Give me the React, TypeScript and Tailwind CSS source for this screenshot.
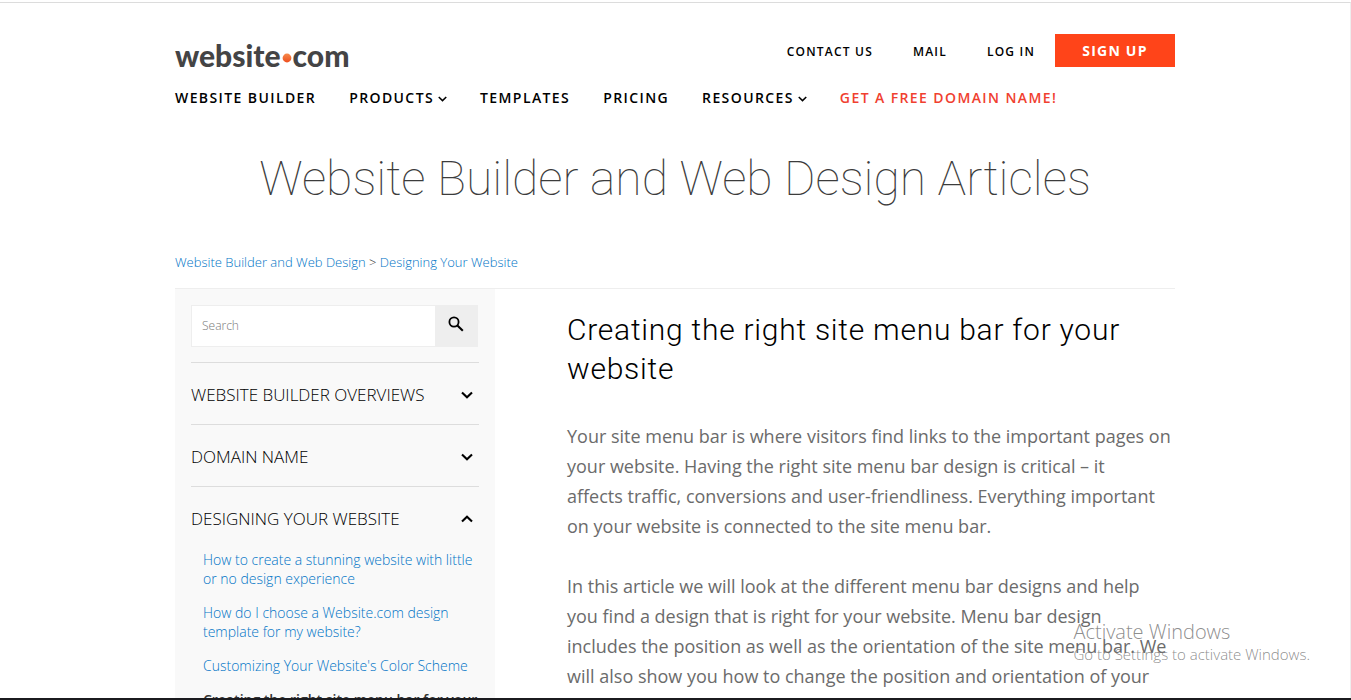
import React, { useState } from "react";

const NAV = [
  { label: "Website Builder", menu: false },
  { label: "Products", menu: true },
  { label: "Templates", menu: false },
  { label: "Pricing", menu: false },
  { label: "Resources", menu: true },
];

type Topic = { title: string; links: { label: string; current?: boolean }[] };

const TOPICS: Topic[] = [
  { title: "Website Builder Overviews", links: [] },
  { title: "Domain Name", links: [] },
  {
    title: "Designing Your Website",
    links: [
      { label: "How to create a stunning website with little or no design experience" },
      { label: "How do I choose a Website.com design template for my website?" },
      { label: "Customizing Your Website's Color Scheme" },
      { label: "Creating the right site menu bar for your website", current: true },
    ],
  },
];

function Caret({ className }: { className: string }) {
  return (
    <svg viewBox="0 0 12 8" className={className} fill="none" stroke="currentColor" aria-hidden="true">
      <path d="M1 1.4 6 6.2l5-4.8" strokeWidth="2.1" />
    </svg>
  );
}

function Logo() {
  return (
    <a href="#" className="flex items-baseline font-[Lato,sans-serif] text-[30px] leading-8 font-black text-[#444445]">
      website
      <svg viewBox="0 0 10 10" className="mx-px mt-1.5 size-[10px] self-center" aria-hidden="true">
        <defs>
          <linearGradient id="dot" x1="0" y1="0" x2="0" y2="1">
            <stop offset="0" stopColor="#f58a4b" />
            <stop offset="1" stopColor="#ee4f1f" />
          </linearGradient>
        </defs>
        <circle cx="5" cy="5" r="4.4" fill="url(#dot)" />
      </svg>
      com
    </a>
  );
}

function Header() {
  return (
    <header className="pt-[31px]">
      <div className="flex items-start justify-between">
        <div className="pt-[5px]">
          <Logo />
        </div>
        <div className="flex items-center text-[12px] leading-5 font-semibold tracking-widest text-black uppercase">
          <div className="flex gap-10 pt-0.5 pr-5">
            <a href="#">Contact us</a>
            <a href="#">Mail</a>
            <a href="#">Log in</a>
          </div>
          <a href="#" className="flex h-[33px] w-[120px] items-center justify-center bg-[#ff4419] text-sm font-bold text-white">
            Sign up
          </a>
        </div>
      </div>
      <nav className="mt-[17px] flex gap-[33px] text-sm leading-5 font-semibold tracking-widest text-black uppercase">
        {NAV.map((item) => (
          <a key={item.label} href="#" className="flex items-center gap-1 whitespace-nowrap">
            {item.label}
            {item.menu && <Caret className="mt-0.5 h-[6px] w-[9px] stroke-[3]" />}
          </a>
        ))}
        <a href="#" className="whitespace-nowrap text-[#f0402f]">Get a free domain name!</a>
      </nav>
    </header>
  );
}

function Sidebar() {
  const [open, setOpen] = useState("Designing Your Website");
  return (
    <aside className="w-80 shrink-0 bg-[#f9f9f9] px-4 pt-4">
      <form className="mr-px mb-[15px] flex h-[42px] border border-[#eeeeee]" onSubmit={(e) => e.preventDefault()}>
        <input
          type="search"
          aria-label="Search"
          placeholder="Search"
          className="min-w-0 flex-1 bg-white px-2.5 text-xs font-light outline-none placeholder:text-[#777777]"
        />
        <button type="submit" aria-label="Search" className="flex w-[42px] items-center justify-center bg-[#eeeeee] pb-1">
          <svg viewBox="0 0 16 16" className="size-4" fill="none" stroke="black" aria-hidden="true">
            <circle cx="6" cy="6" r="4.6" strokeWidth="1.8" />
            <path d="m9.4 9.4 5.4 5.4" strokeWidth="2.1" />
          </svg>
        </button>
      </form>
      {TOPICS.map((topic) => (
        <section key={topic.title} className="border-t border-[#dddddd]">
          <h3>
            <button
              type="button"
              aria-expanded={open === topic.title}
              onClick={() => setOpen(open === topic.title ? "" : topic.title)}
              className="flex h-[61px] w-full items-center justify-between pt-0.5 pr-1.5 text-left text-[17px] font-light text-black uppercase"
            >
              {topic.title}
              <Caret className={open === topic.title ? "h-2 w-3 rotate-180" : "h-2 w-3"} />
            </button>
          </h3>
          {open === topic.title && (
            <ul className="space-y-[15px] pt-0.5 pl-3 text-sm leading-[19px] font-light">
              {topic.links.map((link) => (
                <li key={link.label}>
                  <a href="#" className={link.current ? "font-semibold text-[#333333]" : "text-[#0074c6]"}>
                    {link.label}
                  </a>
                </li>
              ))}
            </ul>
          )}
        </section>
      ))}
    </aside>
  );
}

function Article() {
  return (
    <article className="min-w-0 flex-1 pt-[21px] pl-[72px]">
      <h2 className="font-[Roboto,sans-serif] text-[30px] leading-[39px] font-light tracking-wide text-black">
        Creating the right site menu bar for your website
      </h2>
      <div className="mt-[33px] space-y-[30px] text-lg leading-[30px] text-[#6b6b6b]">
        <p>
          Your site menu bar is where visitors find links to the important pages on your website. Having the right site
          menu bar design is critical – it <br />
          affects traffic, conversions and user-friendliness. Everything important <br />
          on your website is connected to the site menu bar.
        </p>
        <p>
          In this article we will look at the different menu bar designs and help you find a design that is right for
          your website. Menu bar design includes the position as well as the orientation of the site menu bar. We will
          also show you how to change the position and orientation of your
        </p>
      </div>
    </article>
  );
}

export default function App() {
  return (
    <div className="relative flex h-screen flex-col overflow-hidden border-b-2 border-[#1b1b1f] bg-white font-['Open_Sans',sans-serif]">
      <div className="mt-0.5 min-h-0 flex-1 overflow-hidden border-t border-r border-t-[#dcdcdc] border-r-[#eeeeee]">
        <div className="mx-auto max-w-[1000px]">
          <Header />
          <h1 className="mt-[41px] text-center font-[Roboto,sans-serif] text-5xl leading-[60px] font-thin text-[#3c3c3c]">
            Website Builder and Web Design Articles
          </h1>
          <nav
            aria-label="Breadcrumb"
            className="mt-[43px] border-b border-[#eeeeee] pb-4 text-[13px] leading-5 font-light text-[#333333]"
          >
            <a href="#" className="text-[#0074c6]">Website Builder and Web Design</a> &gt;{" "}
            <a href="#" className="text-[#0074c6]">Designing Your Website</a>
          </nav>
          <main className="flex">
            <Sidebar />
            <Article />
          </main>
        </div>
      </div>
      <div className="pointer-events-none absolute right-[41px] bottom-[34px] font-light text-[#707070]/80">
        <p className="text-xl leading-6">Activate Windows</p>
        <p className="text-[15px] leading-5">Go to Settings to activate Windows.</p>
      </div>
    </div>
  );
}
